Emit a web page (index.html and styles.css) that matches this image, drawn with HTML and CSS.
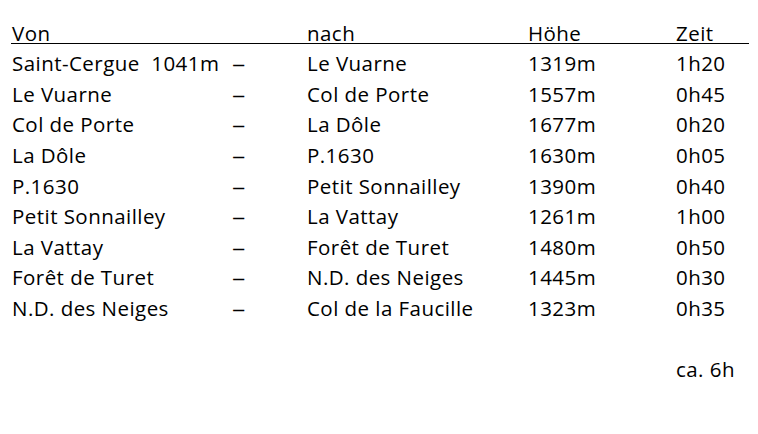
FILE: index.html
```html
<!DOCTYPE html>
<html lang="de">
<head>
<meta charset="utf-8">
<title>Route</title>
<link rel="stylesheet" href="styles.css">
</head>
<body>
<div class="sheet">
  <div class="row head">
    <span>Von</span><span></span><span>nach</span><span>Höhe</span><span>Zeit</span>
  </div>
  <div class="row"><span>Saint-Cergue&nbsp;&nbsp;1041m</span><span class="dash">–</span><span>Le Vuarne</span><span>1319m</span><span>1h20</span></div>
  <div class="row"><span>Le Vuarne</span><span class="dash">–</span><span>Col de Porte</span><span>1557m</span><span>0h45</span></div>
  <div class="row"><span>Col de Porte</span><span class="dash">–</span><span>La Dôle</span><span>1677m</span><span>0h20</span></div>
  <div class="row"><span>La Dôle</span><span class="dash">–</span><span>P.1630</span><span>1630m</span><span>0h05</span></div>
  <div class="row"><span>P.1630</span><span class="dash">–</span><span>Petit Sonnailley</span><span>1390m</span><span>0h40</span></div>
  <div class="row"><span>Petit Sonnailley</span><span class="dash">–</span><span>La Vattay</span><span>1261m</span><span>1h00</span></div>
  <div class="row"><span>La Vattay</span><span class="dash">–</span><span>Forêt de Turet</span><span>1480m</span><span>0h50</span></div>
  <div class="row"><span>Forêt de Turet</span><span class="dash">–</span><span>N.D. des Neiges</span><span>1445m</span><span>0h30</span></div>
  <div class="row"><span>N.D. des Neiges</span><span class="dash">–</span><span>Col de la Faucille</span><span>1323m</span><span>0h35</span></div>
  <div class="row total"><span></span><span></span><span></span><span></span><span>ca. 6h</span></div>
</div>
</body>
</html>
```
FILE: styles.css
```css
html, body {
  margin: 0;
  background: #fff;
}
body {
  font-family: "Open Sans", Lato, sans-serif;
  font-size: 20.5px;
  letter-spacing: 0.45px;
  color: #000;
}
.sheet {
  padding: 24px 0 0 12px;
  width: 737px;
}
.row {
  display: grid;
  grid-template-columns: 220px 75px 221px 148px 73px;
  height: 30.6px;
  line-height: 30.6px;
  white-space: nowrap;
}
.dash {
  display: inline-block;
  transform: scaleX(1.3);
  transform-origin: left center;
}
.row.head {
  height: 19px;
  line-height: 19px;
  border-bottom: 1.5px solid #000;
  margin-left: -1px;
  padding-left: 1px;
  margin-bottom: 4.25px;
}
.row.total {
  margin-top: 30.6px;
}
```
